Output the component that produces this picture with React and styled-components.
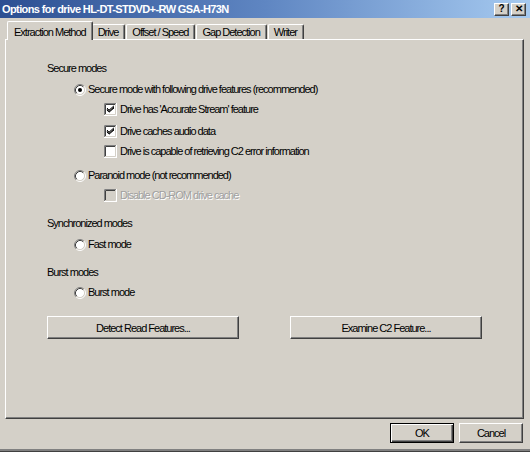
import React from "react";
import styled, { createGlobalStyle } from "styled-components";

const FONT = `"Liberation Sans", Arial, sans-serif`;

const Global = createGlobalStyle`
  html, body { margin: 0; padding: 0; background: #d4d0c8; }
  body { font-family: ${FONT}; font-size: 11px; letter-spacing: -1px; color: #000; }
  * { box-sizing: border-box; }
`;

const Window = styled.div`
  width: 530px;
  height: 452px;
  display: flex;
  flex-direction: column;
  background: #d4d0c8;
  border-bottom: 1px solid #404040;
  box-shadow: inset 0 -2px 0 #808080;
  overflow: hidden;
`;

const TitleBar = styled.div`
  height: 18px;
  flex: none;
  display: flex;
  align-items: center;
  justify-content: space-between;
  padding: 0 4px 0 2px;
  background: linear-gradient(90deg, #2c4f92 0%, #5f86c2 50%, #a6caf0 100%);
`;

const Title = styled.div`
  color: #fff;
  font-weight: bold;
  font-size: 11px;
  letter-spacing: -0.6px;
  line-height: 13px;
  white-space: nowrap;
`;

const Caps = styled.div`
  display: flex;
  gap: 2px;
`;

const CapButton = styled.div`
  width: 15px;
  height: 13px;
  display: flex;
  align-items: center;
  justify-content: center;
  background: #d4d0c8;
  border: 1px solid;
  border-color: #fff #404040 #404040 #fff;
  box-shadow: inset -1px -1px 0 #808080;
  font-weight: bold;
  font-size: 10px;
  letter-spacing: 0;
  line-height: 10px;
  color: #000;
`;

const Body = styled.div`
  flex: 1;
  display: flex;
  flex-direction: column;
  padding: 3px 6px 0 5px;
`;

const TabStrip = styled.div`
  height: 18px;
  display: flex;
  align-items: flex-end;
  padding-left: 4px;
`;

const Tab = styled.div`
  position: relative;
  height: ${(p) => (p.$active ? "19px" : "15px")};
  margin: ${(p) => (p.$active ? "0 -1px -1px -2px" : "0 1px 0 0")};
  padding: ${(p) => (p.$active ? "2px 6px 0 6px" : "0 6px 0 5px")};
  display: flex;
  align-items: center;
  background: #d4d0c8;
  border-top: 1px solid #fff;
  border-left: 1px solid #fff;
  border-right: 1px solid #404040;
  box-shadow: inset -1px 0 0 #808080;
  border-radius: 2px 2px 0 0;
  z-index: ${(p) => (p.$active ? 2 : 1)};
  white-space: nowrap;
  line-height: 13px;
`;

const Panel = styled.div`
  flex: none;
  height: 380px;
  display: flex;
  flex-direction: column;
  padding: 22px 0 0 41px;
  border: 1px solid;
  border-color: #fff #404040 #404040 #fff;
  box-shadow: inset -1px -1px 0 #808080;
`;

const Heading = styled.div`
  height: 13px;
  line-height: 13px;
  margin-top: ${(p) => p.$mt || 0}px;
`;

const Row = styled.div`
  height: 13px;
  display: flex;
  align-items: center;
  gap: ${(p) => (p.$check ? 3 : 2)}px;
  padding-left: ${(p) => p.$indent}px;
  margin-top: ${(p) => p.$mt}px;
  line-height: 13px;
`;

const Label = styled.span`
  white-space: nowrap;
  color: ${(p) => (p.$disabled ? "#a0a0a0" : "#000")};
  text-shadow: ${(p) => (p.$disabled ? "1px 1px 0 #fff" : "none")};
`;

const ActionRow = styled.div`
  display: flex;
  gap: 51px;
  margin-top: 17px;
`;

const Button = styled.div`
  width: ${(p) => p.$w}px;
  height: ${(p) => p.$h}px;
  display: flex;
  align-items: center;
  justify-content: center;
  background: #d4d0c8;
  border: 1px solid;
  border-color: ${(p) => (p.$default ? "#000" : "#fff #404040 #404040 #fff")};
  box-shadow: ${(p) =>
    p.$default
      ? "inset 1px 1px 0 #fff, inset -1px -1px 0 #404040, inset -2px -2px 0 #808080"
      : "inset -1px -1px 0 #808080"};
  white-space: nowrap;
`;

const Footer = styled.div`
  display: flex;
  justify-content: flex-end;
  gap: 5px;
  padding: 4px 1px 0 0;
`;

const Radio = ({ checked }) => (
  <svg width="12" height="12" viewBox="0 0 12 12">
    <circle cx="6" cy="6" r="4.5" fill="#fff" />
    <path d="M2.11 9.89 A5.5 5.5 0 0 1 9.89 2.11" fill="none" stroke="#808080" />
    <path d="M9.89 2.11 A5.5 5.5 0 0 1 2.11 9.89" fill="none" stroke="#fff" />
    <path d="M2.82 9.18 A4.5 4.5 0 0 1 9.18 2.82" fill="none" stroke="#404040" />
    <path d="M9.18 2.82 A4.5 4.5 0 0 1 2.82 9.18" fill="none" stroke="#d4d0c8" />
    {checked && <circle cx="6" cy="6" r="2" fill="#000" />}
  </svg>
);

const Check = ({ checked, disabled }) => (
  <svg width="13" height="13" viewBox="0 0 13 13">
    <rect x="0" y="0" width="13" height="13" fill="#fff" />
    <rect x="2" y="2" width="9" height="9" fill={disabled ? "#d4d0c8" : "#fff"} />
    <path d="M0.5 12 V0.5 H12" fill="none" stroke="#808080" />
    <path d="M1.5 11 V1.5 H11" fill="none" stroke="#404040" />
    <path d="M1 11.5 H11.5 V1" fill="none" stroke="#d4d0c8" />
    {checked && (
      <path d="M3 5 L5 7.2 L10 2.8 M3 6.2 L5 8.4 L10 4 M3 7 L5 9.2 L10 5" fill="none" stroke="#000" strokeWidth="1" />
    )}
  </svg>
);

export default function App() {
  return (
    <>
      <Global />
      <Window>
        <TitleBar>
          <Title>Options for drive HL-DT-STDVD+-RW GSA-H73N</Title>
          <Caps>
            <CapButton>?</CapButton>
            <CapButton>✕</CapButton>
          </Caps>
        </TitleBar>
        <Body>
          <TabStrip>
            <Tab $active>Extraction Method</Tab>
            <Tab>Drive</Tab>
            <Tab>Offset / Speed</Tab>
            <Tab>Gap Detection</Tab>
            <Tab>Writer</Tab>
          </TabStrip>
          <Panel>
            <Heading>Secure modes</Heading>
            <Row $indent={27} $mt={8}>
              <Radio checked />
              <Label>Secure mode with following drive features (recommended)</Label>
            </Row>
            <Row $indent={57} $mt={7} $check>
              <Check checked />
              <Label>Drive has 'Accurate Stream' feature</Label>
            </Row>
            <Row $indent={57} $mt={9} $check>
              <Check checked />
              <Label>Drive caches audio data</Label>
            </Row>
            <Row $indent={57} $mt={7} $check>
              <Check />
              <Label>Drive is capable of retrieving C2 error information</Label>
            </Row>
            <Row $indent={27} $mt={11}>
              <Radio />
              <Label>Paranoid mode (not recommended)</Label>
            </Row>
            <Row $indent={57} $mt={7} $check>
              <Check disabled />
              <Label $disabled>Disable CD-ROM drive cache</Label>
            </Row>
            <Heading $mt={15}>Synchronized modes</Heading>
            <Row $indent={27} $mt={8}>
              <Radio />
              <Label>Fast mode</Label>
            </Row>
            <Heading $mt={15}>Burst modes</Heading>
            <Row $indent={27} $mt={7}>
              <Radio />
              <Label>Burst mode</Label>
            </Row>
            <ActionRow>
              <Button $w={192} $h={23}>Detect Read Features...</Button>
              <Button $w={192} $h={23}>Examine C2 Feature...</Button>
            </ActionRow>
          </Panel>
          <Footer>
            <Button $w={64} $h={20} $default>OK</Button>
            <Button $w={64} $h={20}>Cancel</Button>
          </Footer>
        </Body>
      </Window>
    </>
  );
}
